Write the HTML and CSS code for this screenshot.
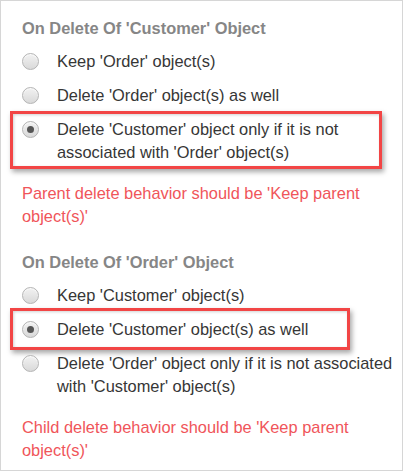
FILE: index.html
```html
<!DOCTYPE html>
<html>
<head>
<meta charset="utf-8">
<link rel="stylesheet" href="styles.css">
</head>
<body>
<div class="panel">
  <section class="group">
    <div class="heading">On Delete Of 'Customer' Object</div>
    <div class="option"><span class="radio"></span><span class="label">Keep 'Order' object(s)</span></div>
    <div class="option"><span class="radio"></span><span class="label">Delete 'Order' object(s) as well</span></div>
    <div class="option hl hl-a"><span class="radio checked"></span><span class="label">Delete 'Customer' object only if it is not associated with 'Order' object(s)</span></div>
    <div class="error">Parent delete behavior should be 'Keep parent object(s)'</div>
  </section>
  <section class="group">
    <div class="heading">On Delete Of 'Order' Object</div>
    <div class="option"><span class="radio"></span><span class="label">Keep 'Customer' object(s)</span></div>
    <div class="option hl hl-b"><span class="radio checked"></span><span class="label">Delete 'Customer' object(s) as well</span></div>
    <div class="option"><span class="radio"></span><span class="label">Delete 'Order' object only if it is not associated with 'Customer' object(s)</span></div>
    <div class="error">Child delete behavior should be 'Keep parent object(s)'</div>
  </section>
</div>
</body>
</html>
```

FILE: styles.css
```css
html, body {
  margin: 0;
  padding: 0;
  background: #ffffff;
}

body {
  font-family: "Liberation Sans", Arial, sans-serif;
  font-size: 16.4px;
  line-height: 23px;
  color: #363636;
}

.panel {
  box-sizing: border-box;
  width: 403px;
  height: 471px;
  border: 1px solid #d6d6d6;
  padding: 16px 4px 0 21px;
  display: flex;
  flex-direction: column;
  gap: 23px;
}

.group {
  display: flex;
  flex-direction: column;
  gap: 11px;
}

.heading {
  font-weight: bold;
  color: #868686;
  height: 22px;
  line-height: 22px;
}

.option {
  display: flex;
  align-items: flex-start;
  gap: 18px;
  position: relative;
}

.radio {
  flex: none;
  box-sizing: border-box;
  width: 17px;
  height: 17px;
  margin-top: 3px;
  border-radius: 50%;
  border: 1px solid #b4b4b4;
  background: linear-gradient(#f2f2f2, #d9d9d9);
  box-shadow: inset 0 1px 1px rgba(255,255,255,0.8);
  position: relative;
}

.radio.checked::after {
  content: "";
  position: absolute;
  left: 4px;
  top: 4px;
  width: 7px;
  height: 7px;
  border-radius: 50%;
  background: #555555;
}

.hl::after {
  content: "";
  position: absolute;
  border: 3px solid #f24545;
  box-shadow: 2px 3px 5px rgba(0,0,0,0.35), inset 1px 1px 3px rgba(0,0,0,0.18);
  pointer-events: none;
}

.hl-a::after {
  top: -7px;
  bottom: -5px;
  left: -12px;
  right: 16px;
}

.hl-b::after {
  top: -10px;
  bottom: -9px;
  left: -12px;
  right: 48px;
}

.error {
  color: #f0555a;
  margin-top: 7px;
}
```
